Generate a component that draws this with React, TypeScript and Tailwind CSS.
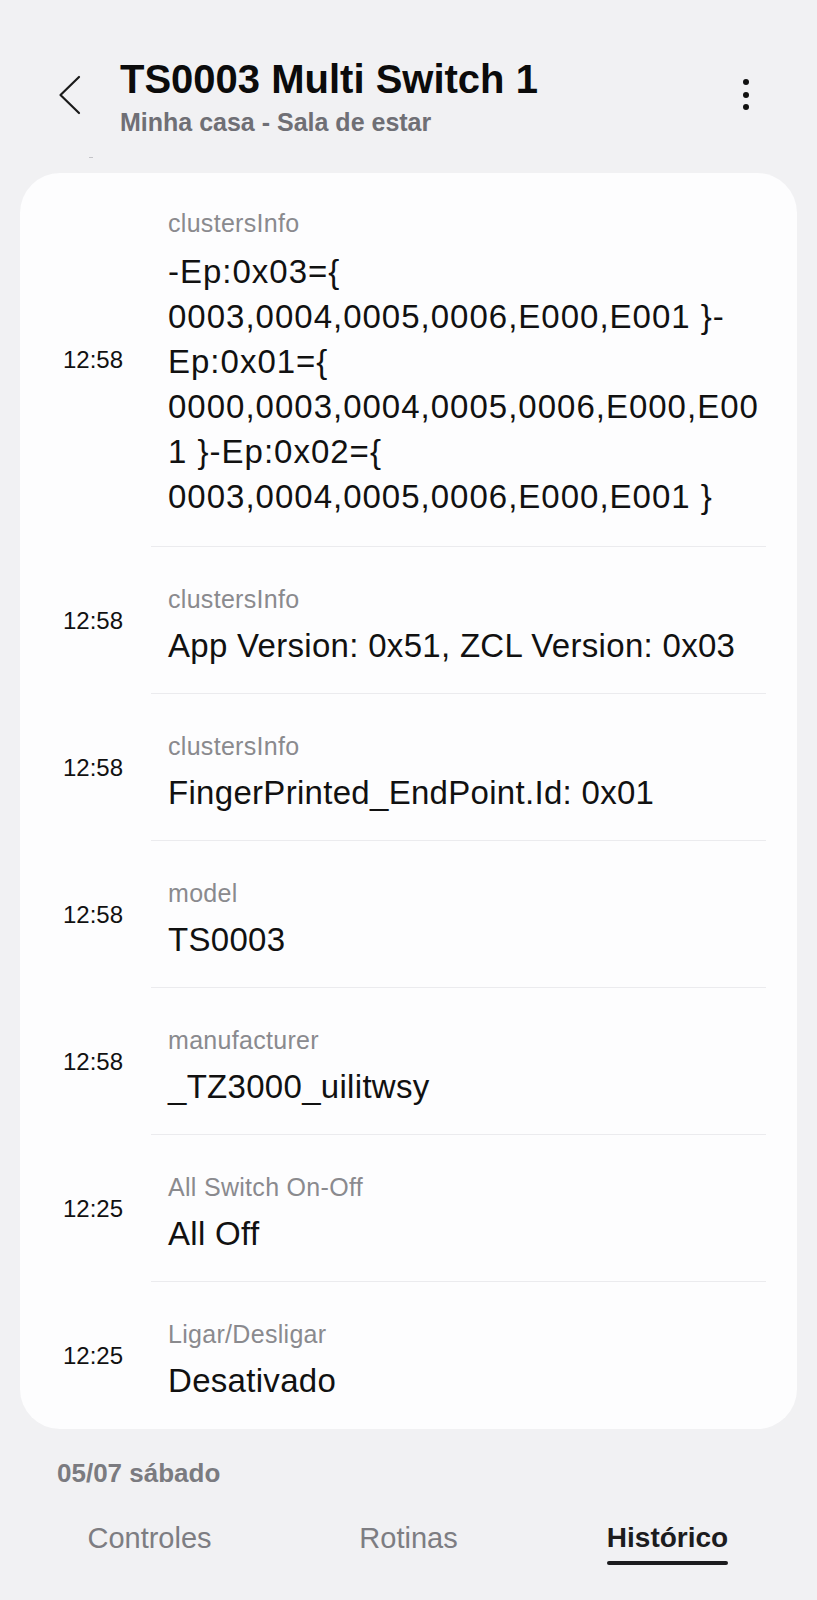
import React from "react";

type Entry = { time: string; label: string; lines: string[] };

const entries: Entry[] = [
  {
    time: "12:58",
    label: "clustersInfo",
    lines: [
      "-Ep:0x03={",
      "0003,0004,0005,0006,E000,E001 }-",
      "Ep:0x01={",
      "0000,0003,0004,0005,0006,E000,E00",
      "1 }-Ep:0x02={",
      "0003,0004,0005,0006,E000,E001 }",
    ],
  },
  { time: "12:58", label: "clustersInfo", lines: ["App Version: 0x51, ZCL Version: 0x03"] },
  { time: "12:58", label: "clustersInfo", lines: ["FingerPrinted_EndPoint.Id: 0x01"] },
  { time: "12:58", label: "model", lines: ["TS0003"] },
  { time: "12:58", label: "manufacturer", lines: ["_TZ3000_uilitwsy"] },
  { time: "12:25", label: "All Switch On-Off", lines: ["All Off"] },
  { time: "12:25", label: "Ligar/Desligar", lines: ["Desativado"] },
];

function Row({ entry, first, last }: { entry: Entry; first: boolean; last: boolean }) {
  return (
    <div className="flex">
      <div className="flex w-[131px] shrink-0 items-center pl-[43px] text-[24px] leading-none text-[#111]">
        {entry.time}
      </div>
      <div
        className={
          "flex-1 pl-[17px] " +
          (first ? "pt-[35px] pb-[27px] border-b border-[#ebebee]" : last ? "pt-[37px] pb-[26px]" : "pt-[37px] pb-[25px] border-b border-[#ebebee]")
        }
      >
        <p className="text-[25px] leading-[30px] tracking-[0.3px] text-[#8a8a8e]">{entry.label}</p>
        <div className={first ? "mt-[11px]" : "mt-[9px]"}>
          {entry.lines.map((l, i) => (
            <p
              key={i}
              className={
                "whitespace-nowrap text-[33px] leading-[45px] text-[#111] " +
                (first ? "tracking-[1px]" : "tracking-[0.3px]")
              }
            >
              {l}
            </p>
          ))}
        </div>
      </div>
    </div>
  );
}

export default function App() {
  return (
    <div className="min-h-[1600px] bg-[#f1f1f3] font-['Liberation_Sans',Arial,sans-serif]">
      {/* header */}
      <div className="flex items-start pt-[57px]">
        <svg className="ml-[58px] mt-[18px] shrink-0" width="24" height="40" viewBox="0 0 24 40" fill="none">
          <path d="M21 2 L2.5 20 L21 38" stroke="#1a1a1a" strokeWidth="2.2" strokeLinecap="round" strokeLinejoin="round" />
        </svg>
        <div className="ml-[38px]">
          <h1 className="text-[40px] font-bold leading-[44px] text-[#0b0b0b]">TS0003 Multi Switch 1</h1>
          <p className="mt-[6px] text-[25px] font-bold leading-[30px] text-[#6f6f75]">Minha casa - Sala de estar</p>
        </div>
        <div className="ml-auto mr-[68px] mt-[22px] flex flex-col gap-[6.5px]">
          <span className="h-[6px] w-[6px] rounded-full bg-[#111]" />
          <span className="h-[6px] w-[6px] rounded-full bg-[#111]" />
          <span className="h-[6px] w-[6px] rounded-full bg-[#111]" />
        </div>
      </div>

      <div className="ml-[89px] mt-[20px] h-px w-[4px] bg-[#c4c4c8]" />

      {/* history card */}
      <div className="mx-[20px] mt-[15px] rounded-[40px] bg-[#fdfdfe] pr-[31px]">
        {entries.map((e, i) => (
          <Row key={i} entry={e} first={i === 0} last={i === entries.length - 1} />
        ))}
      </div>

      <p className="mt-[28px] pl-[57px] text-[26px] font-bold leading-[32px] text-[#7b7b80]">05/07 sábado</p>

      {/* tabs */}
      <div className="mt-[32px] grid grid-cols-3 px-[20px]">
        <div className="flex justify-center">
          <span className="text-[29px] leading-[34px] text-[#7d7d82]">Controles</span>
        </div>
        <div className="flex justify-center">
          <span className="text-[29px] leading-[34px] text-[#7d7d82]">Rotinas</span>
        </div>
        <div className="flex justify-center">
          <div className="inline-flex flex-col">
            <span className="text-[28px] font-bold leading-[34px] text-[#1c1c1e]">Histórico</span>
            <span className="mt-[6px] h-[4px] w-full rounded-full bg-[#1c1c1e]" />
          </div>
        </div>
      </div>
    </div>
  );
}
